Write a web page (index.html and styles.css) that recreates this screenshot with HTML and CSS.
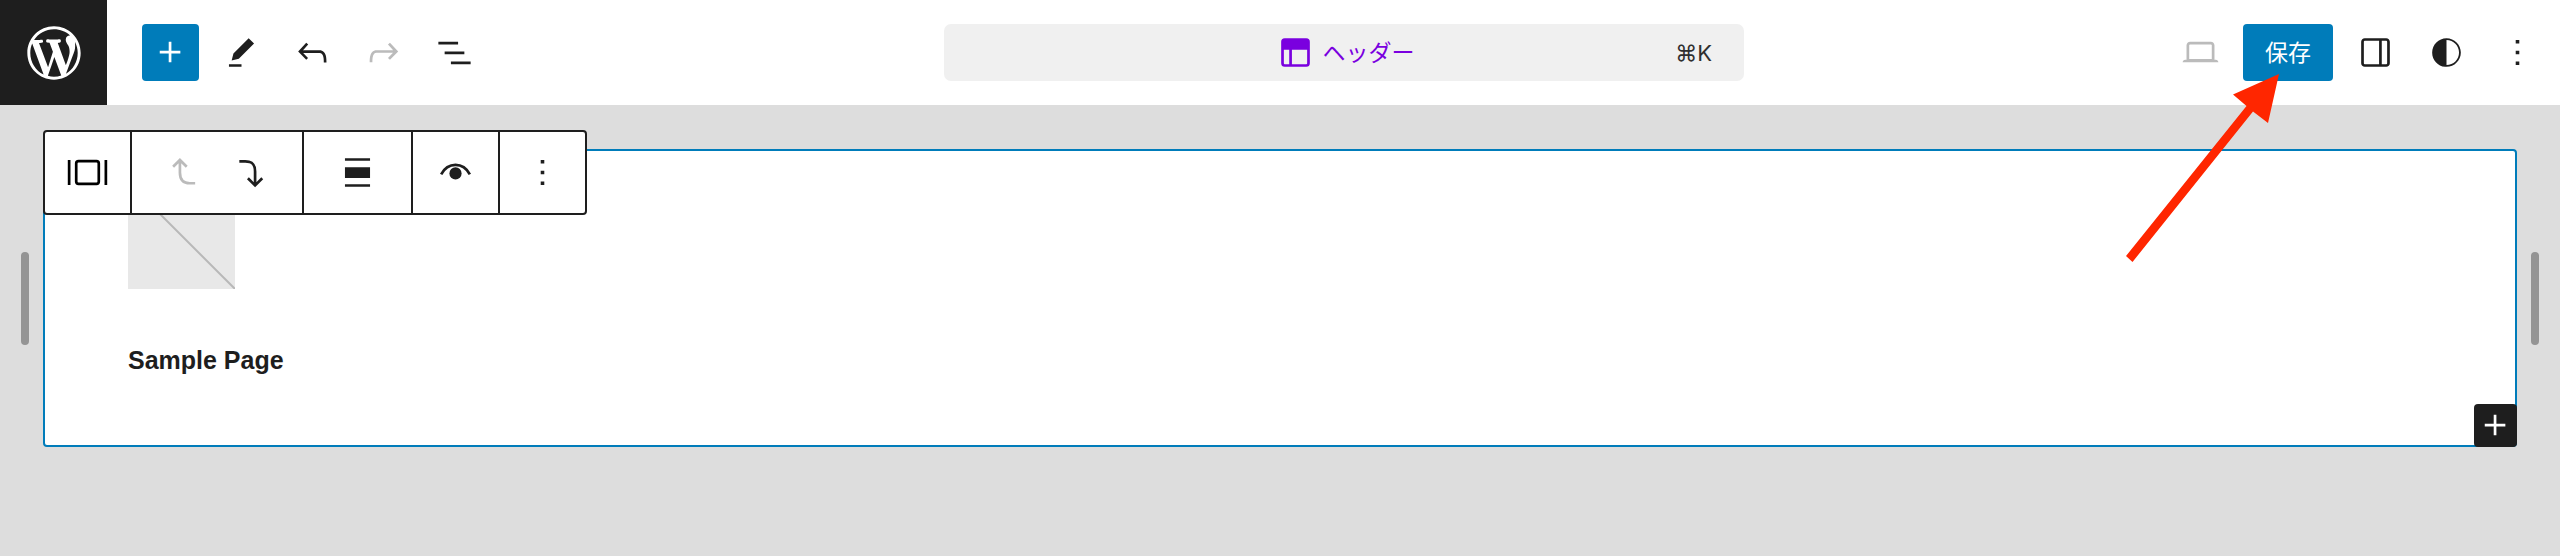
FILE: index.html
```html
<!DOCTYPE html>
<html lang="ja">
<head>
  <meta charset="UTF-8">
  <meta name="viewport" content="width=device-width, initial-scale=1">
  <title>ヘッダー</title>
  <link rel="stylesheet" href="styles.css">
</head>
<body>

<header class="topbar">
  <a class="site-logo" href="#" aria-label="WordPress">
    <svg viewBox="-2 -2 24 24"><path d="M20 10c0-5.51-4.49-10-10-10C4.48 0 0 4.49 0 10c0 5.52 4.48 10 10 10 5.51 0 10-4.48 10-10zM7.78 15.37L4.37 6.22c.55-.02 1.17-.08 1.17-.08.5-.06.44-1.13-.06-1.11 0 0-1.45.11-2.37.11-.18 0-.37 0-.58-.01C4.12 2.69 6.87 1.11 10 1.11c2.33 0 4.45.87 6.05 2.34-.68-.11-1.65.39-1.65 1.58 0 .74.45 1.36.9 2.1.35.61.55 1.36.55 2.46 0 1.49-1.4 5-1.4 5l-3.03-8.37c.54-.02.82-.17.82-.17.5-.05.44-1.25-.06-1.22 0 0-1.44.12-2.38.12-.87 0-2.33-.12-2.33-.12-.5-.03-.56 1.2-.06 1.22l.92.08 1.26 3.41zM17.41 10c.24-.64.74-1.87.43-4.25.7 1.29 1.05 2.71 1.05 4.25 0 3.29-1.73 6.24-4.4 7.78.97-2.59 1.94-5.2 2.92-7.78zM6.1 18.09C3.12 16.65 1.11 13.53 1.11 10c0-1.3.23-2.48.72-3.59C3.25 10.3 4.67 14.2 6.1 18.09zm4.03-6.63l2.58 6.98c-.86.29-1.76.45-2.71.45-.79 0-1.57-.11-2.29-.33.81-2.38 1.62-4.74 2.42-7.1z"/></svg>
  </a>

  <div class="topbar-inner">
    <div class="tools">
      <button class="btn btn-primary" type="button" aria-label="ブロック挿入">
        <svg class="icon" viewBox="0 0 24 24"><path d="M11 12.5V17.5H12.5V12.5H17.5V11H12.5V6H11V11H6V12.5H11Z"/></svg>
      </button>
      <button class="btn" type="button" aria-label="ツール">
        <svg class="icon" viewBox="0 0 24 24"><path d="m19 7-3-3-8.5 8.5-1 4 4-1L19 7Zm-7 11.5H5V20h7v-1.5Z"/></svg>
      </button>
      <button class="btn" type="button" aria-label="元に戻す">
        <svg class="icon" viewBox="0 0 24 24"><path d="M18.3 11.7c-.6-.6-1.4-.9-2.3-.9H6.7l2.9-3.3-1.1-1-4.5 5L8.5 16l1-1-2.7-2.7H16c.5 0 .9.2 1.3.5 1 1 1 3.4 1 4.5v.3h1.5v-.2c0-1.5 0-4.3-1.5-5.7z"/></svg>
      </button>
      <button class="btn" type="button" aria-label="やり直す" disabled>
        <svg class="icon" viewBox="0 0 24 24"><path d="M15.6 6.5l-1.1 1 2.9 3.3H8c-.9 0-1.7.3-2.3.9-1.4 1.5-1.4 4.2-1.4 5.6v.2h1.5v-.3c0-1.1 0-3.5 1-4.5.3-.3.7-.5 1.3-.5h9.2L14.5 15l1.1 1.1 4.6-4.6-4.6-5z"/></svg>
      </button>
      <button class="btn" type="button" aria-label="リスト表示">
        <svg class="icon" viewBox="0 0 24 24"><path d="M3 6h11v1.5H3V6Zm3.5 5.5h11V13h-11v-1.5ZM21 17H10v1.5h11V17Z"/></svg>
      </button>
    </div>

    <button class="command-bar" type="button">
      <span class="command-title">
        <svg class="icon" viewBox="0 0 24 24"><path d="M18.5 10.5H10v8h8a.5.5 0 00.5-.5v-7.5zm-10 0h-3V18a.5.5 0 00.5.5h2.5v-8zM6 4h12a2 2 0 012 2v12a2 2 0 01-2 2H6a2 2 0 01-2-2V6a2 2 0 012-2z"/></svg>
        <span class="label">ヘッダー</span>
      </span>
      <span class="command-key">⌘K</span>
    </button>

    <div class="actions">
      <button class="btn" type="button" aria-label="表示" disabled>
        <svg class="icon" viewBox="0 0 24 24"><path d="M20.5 16h-.7V8c0-1.1-.9-2-2-2H6.2c-1.1 0-2 .9-2 2v8h-.7c-.8 0-1.5.7-1.5 1.5h20c0-.8-.7-1.5-1.5-1.5zM5.7 8c0-.3.2-.5.5-.5h11.6c.3 0 .5.2.5.5v7.6H5.7V8z"/></svg>
      </button>
      <div class="save">
        <button class="btn btn-primary btn-save" type="button"><span class="label">保存</span></button>
        <!-- red pointer over the save button -->
        <svg class="pointer" viewBox="0 0 153 188" aria-hidden="true"><path d="M153 0 142 49 127 37.5 6.5 188 0 182 120.5 32 107 20.5Z"/></svg>
      </div>
      <button class="btn" type="button" aria-label="設定">
        <svg class="icon" viewBox="0 0 24 24"><path d="M18 4H6c-1.1 0-2 .9-2 2v12c0 1.1.9 2 2 2h12c1.1 0 2-.9 2-2V6c0-1.1-.9-2-2-2zm-4 14.5H6c-.3 0-.5-.2-.5-.5V6c0-.3.2-.5.5-.5h8v13zm4.5-.5c0 .3-.2.5-.5.5h-2.5v-13H18c.3 0 .5.2.5.5v12z"/></svg>
      </button>
      <button class="btn" type="button" aria-label="スタイル">
        <svg class="icon" viewBox="0 0 24 24"><path d="M12 4c-4.4 0-8 3.6-8 8v.1c0 4.1 3.2 7.5 7.2 7.9h.8c4.4 0 8-3.6 8-8s-3.6-8-8-8zm0 15V5c3.9 0 7 3.1 7 7s-3.1 7-7 7z"/></svg>
      </button>
      <button class="btn" type="button" aria-label="オプション">
        <svg class="icon" viewBox="0 0 24 24"><path d="M13 19h-2v-2h2v2zm0-6h-2v-2h2v2zm0-6h-2V5h2v2z"/></svg>
      </button>
    </div>
  </div>
</header>

<main class="canvas">
  <div class="handle"></div>

  <div class="frame">
    <div class="block-toolbar" role="toolbar" aria-label="ブロックツール">
      <div class="group">
        <button class="tool" type="button" aria-label="横並び">
          <svg class="icon icon-block" viewBox="0 0 24 24"><path d="M1 5h1.5v14H1zM21.5 5H23v14h-1.5z"/><rect class="line" x="5.7" y="5.7" width="12.6" height="12.6" rx="1.3"/></svg>
        </button>
      </div>
      <div class="group group-movers">
        <button class="tool" type="button" aria-label="上に移動" disabled>
          <svg class="icon" viewBox="0 0 24 24"><path class="line" d="M6.2 8.8 10 5l3.8 3.8M10 5v7c0 4 1.5 6 5.5 6h3"/></svg>
        </button>
        <button class="tool" type="button" aria-label="下に移動">
          <svg class="icon" viewBox="0 0 24 24"><path class="line" d="M10 15.2l4 4 4-4M14 19v-7.5c0-4-1.500-5.700-5.500-5.700H5.200"/></svg>
        </button>
      </div>
      <div class="group group-wide">
        <button class="tool" type="button" aria-label="配置">
          <svg class="icon" viewBox="0 0 24 24"><path d="M19 5.5H5V4h14v1.5ZM19 20H5v-1.5h14V20ZM5 9h14v6H5V9Z"/></svg>
        </button>
      </div>
      <div class="group">
        <button class="tool" type="button" aria-label="表示設定">
          <svg class="icon" viewBox="0 0 24 24"><path class="line" d="M4 13C4.7 11.7 7.200 7.750 12 7.750S19.300 11.700 20 13"/><circle cx="12" cy="12.5" r="3.400"/></svg>
        </button>
      </div>
      <div class="group">
        <button class="tool" type="button" aria-label="オプション">
          <svg class="icon" viewBox="0 0 24 24"><path d="M13 19h-2v-2h2v2zm0-6h-2v-2h2v2zm0-6h-2V5h2v2z"/></svg>
        </button>
      </div>
    </div>

    <svg class="placeholder" viewBox="0 0 107 107" aria-hidden="true"><path d="M0 0 107 107"/></svg>
    <a class="page-link" href="#">Sample Page</a>

    <button class="appender" type="button" aria-label="ブロックを追加">
      <svg class="icon" viewBox="0 0 24 24"><path d="M11 12.5V17.5H12.5V12.5H17.5V11H12.5V6H11V11H6V12.5H11Z"/></svg>
    </button>
  </div>

  <div class="handle"></div>
</main>

</body>
</html>
```

FILE: styles.css
```css
* {
  box-sizing: border-box;
}

body {
  margin: 0;
  background: #ddd;
  color: #1e1e1e;
  font-family: Inter, "Noto Sans CJK JP", sans-serif;
  font-size: 23px;
}

button {
  margin: 0;
  padding: 0;
  border: none;
  background: none;
  color: inherit;
  font: inherit;
  cursor: pointer;
}

svg {
  display: block;
  fill: currentColor;
}

.icon {
  width: 43px;
  height: 43px;
  flex: none;
}

.line {
  fill: none;
  stroke: currentColor;
  stroke-width: 1.5;
}

/* Top bar */
.topbar {
  display: flex;
  height: 105px;
  background: #fff;
}

.site-logo {
  display: flex;
  align-items: center;
  justify-content: center;
  width: 107px;
  flex: none;
  background: #1e1e1e;
  color: #fff;
}

.site-logo svg {
  width: 64px;
  height: 64px;
}

.topbar-inner {
  flex: 1;
  display: grid;
  grid-template-columns: 1fr minmax(0, 800px) 1fr;
  align-items: center;
  padding: 0 14px 0 35px;
}

.tools,
.actions {
  display: flex;
  gap: 14px;
}

.actions {
  justify-content: flex-end;
}

.btn {
  display: flex;
  align-items: center;
  justify-content: center;
  width: 57px;
  height: 57px;
  border-radius: 4px;
}

.btn:disabled,
.tool:disabled {
  color: #bbb;
  cursor: default;
}

.btn-primary {
  background: #007cba;
  color: #fff;
}

.btn-save {
  width: auto;
  padding: 0 22px;
}

.label {
  padding-bottom: 4px;
}

.save {
  position: relative;
}

.pointer {
  position: absolute;
  top: 50px;
  right: 54px;
  width: 153px;
  height: 188px;
  fill: #ff2600;
  pointer-events: none;
  z-index: 5;
}

.command-bar {
  display: grid;
  grid-template-columns: 1fr auto 1fr;
  align-items: center;
  height: 57px;
  padding: 0 32px;
  border-radius: 7px;
  background: #f0f0f0;
}

.command-title {
  grid-column: 2;
  display: flex;
  align-items: center;
  gap: 6px;
  color: #7a00df;
}

.command-key {
  text-align: right;
  color: #2f2f2f;
  font-size: 22px;
}

/* Canvas */
.canvas {
  display: flex;
  align-items: center;
  gap: 14px;
  padding: 44px 21px;
}

.handle {
  width: 8px;
  height: 93px;
  flex: none;
  border-radius: 4px;
  background: #949494;
}

.frame {
  position: relative;
  flex: 1;
  padding: 31px 83px 68px;
  border: 2px solid #007cba;
  border-radius: 4px;
  background: #fff;
}

.placeholder {
  width: 107px;
  height: 107px;
  background: #e8e8e8;
  stroke: #b8b8b8;
  stroke-width: 2;
}

.page-link {
  display: inline-block;
  margin-top: 54px;
  color: #1e1e1e;
  font-family: "Liberation Sans", Arial, sans-serif;
  font-size: 25px;
  font-weight: bold;
  line-height: 34px;
  text-decoration: none;
}

.block-toolbar {
  position: absolute;
  top: -21px;
  left: -2px;
  display: flex;
  height: 85px;
  border: 2px solid #1e1e1e;
  border-radius: 4px;
  background: #fff;
}

.group {
  display: flex;
  width: 87px;
  border-right: 2px solid #1e1e1e;
}

.group:last-child {
  width: 85px;
  border-right: none;
}

.group-movers {
  width: 172px;
  padding: 0 17px;
}

.group-wide {
  width: 109px;
}

.tool {
  flex: 1;
  display: flex;
  align-items: center;
  justify-content: center;
}

.icon-block {
  color: #000;
}

.appender {
  position: absolute;
  right: -2px;
  bottom: -2px;
  border-radius: 4px;
  background: #1e1e1e;
  color: #fff;
}
```
